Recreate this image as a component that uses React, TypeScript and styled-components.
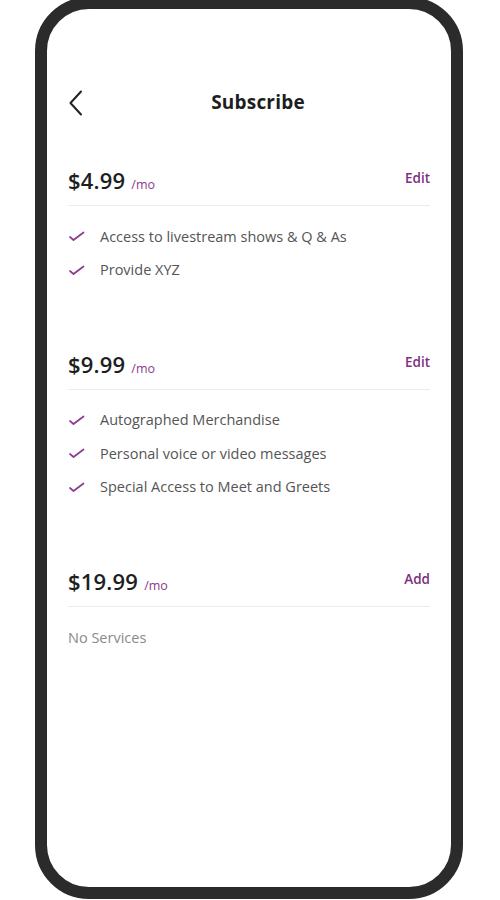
import React from "react";
import styled, { createGlobalStyle } from "styled-components";

const Global = createGlobalStyle`
  html, body { margin: 0; padding: 0; background: #ffffff; }
  body { font-family: "Open Sans", "Noto Sans", sans-serif; overflow: hidden; }
  * { box-sizing: border-box; }
`;

const Page = styled.div`
  width: 500px;
  height: 900px;
  display: flex;
  justify-content: flex-start;
  padding-left: 35px;
`;

const Phone = styled.div`
  width: 428px;
  height: 902px;
  margin-top: -3px;
  border: 12px solid #2b2b2b;
  border-radius: 54px;
  background: #ffffff;
  padding: 78px 21px 0 21px;
  display: flex;
  flex-direction: column;
`;

const Header = styled.div`
  height: 30px;
  display: flex;
  align-items: center;
  justify-content: center;
  position: relative;
`;

const Back = styled.button`
  position: absolute;
  left: -4px;
  top: 2px;
  width: 24px;
  height: 28px;
  border: 0;
  background: none;
  padding: 0;
  display: flex;
  align-items: center;
  justify-content: center;
`;

const Title = styled.h1`
  margin: 0 0 0 18px;
  font-size: 19px;
  font-weight: 700;
  color: #1e1e1e;
  letter-spacing: 0.2px;
`;

const Plan = styled.section<{ $first?: boolean }>`
  margin-top: ${(p) => (p.$first ? "48px" : "69px")};
  display: flex;
  flex-direction: column;
`;

const PriceRow = styled.div`
  height: 41px;
  padding-bottom: 10px;
  border-bottom: 1px solid #ececec;
  display: flex;
  align-items: center;
  justify-content: space-between;
`;

const PriceGroup = styled.div`
  display: flex;
  align-items: baseline;
`;

const Price = styled.span`
  font-size: 22px;
  font-weight: 600;
  color: #1f1f1f;
  letter-spacing: 0.2px;
`;

const Per = styled.span`
  margin-left: 6px;
  font-size: 12.5px;
  font-weight: 500;
  color: #8a3a8c;
`;

const Action = styled.button`
  border: 0;
  background: none;
  padding: 0;
  margin-top: -4px;
  font-family: "Open Sans", "Noto Sans", sans-serif;
  font-size: 13.5px;
  font-weight: 600;
  color: #7d2f7f;
  cursor: pointer;
`;

const List = styled.ul`
  list-style: none;
  margin: 20px 0 0 0;
  padding: 0;
  display: flex;
  flex-direction: column;
  gap: 13.5px;
`;

const Item = styled.li`
  height: 20px;
  display: flex;
  align-items: center;
  gap: 15px;
  font-size: 14.5px;
  color: #555555;
`;

const Empty = styled.div`
  margin-top: 21px;
  height: 20px;
  line-height: 20px;
  font-size: 14.5px;
  color: #8a8a8a;
`;

const Check = () => (
  <svg width="17" height="12" viewBox="0 0 17 12" fill="none">
    <path
      d="M2 7 L5.5 10 L15.5 2.5"
      stroke="#8e3a8f"
      strokeWidth="1.7"
      strokeLinecap="round"
      strokeLinejoin="round"
    />
  </svg>
);

const Chevron = () => (
  <svg width="16" height="26" viewBox="0 0 16 26" fill="none">
    <path
      d="M13 1.5 L2.5 13 L13 24.5"
      stroke="#222"
      strokeWidth="2"
      strokeLinecap="round"
      strokeLinejoin="round"
    />
  </svg>
);

type PlanData = {
  price: string;
  action: string;
  items: string[];
};

const plans: PlanData[] = [
  {
    price: "$4.99",
    action: "Edit",
    items: ["Access to livestream shows & Q & As", "Provide XYZ"],
  },
  {
    price: "$9.99",
    action: "Edit",
    items: [
      "Autographed Merchandise",
      "Personal voice or video messages",
      "Special Access to Meet and Greets",
    ],
  },
  { price: "$19.99", action: "Add", items: [] },
];

export default function App() {
  return (
    <>
      <Global />
      <Page>
        <Phone>
          <Header>
            <Back aria-label="Back">
              <Chevron />
            </Back>
            <Title>Subscribe</Title>
          </Header>
          {plans.map((p, i) => (
            <Plan key={p.price} $first={i === 0}>
              <PriceRow>
                <PriceGroup>
                  <Price>{p.price}</Price>
                  <Per>/mo</Per>
                </PriceGroup>
                <Action>{p.action}</Action>
              </PriceRow>
              {p.items.length > 0 ? (
                <List>
                  {p.items.map((t) => (
                    <Item key={t}>
                      <Check />
                      <span>{t}</span>
                    </Item>
                  ))}
                </List>
              ) : (
                <Empty>No Services</Empty>
              )}
            </Plan>
          ))}
        </Phone>
      </Page>
    </>
  );
}
